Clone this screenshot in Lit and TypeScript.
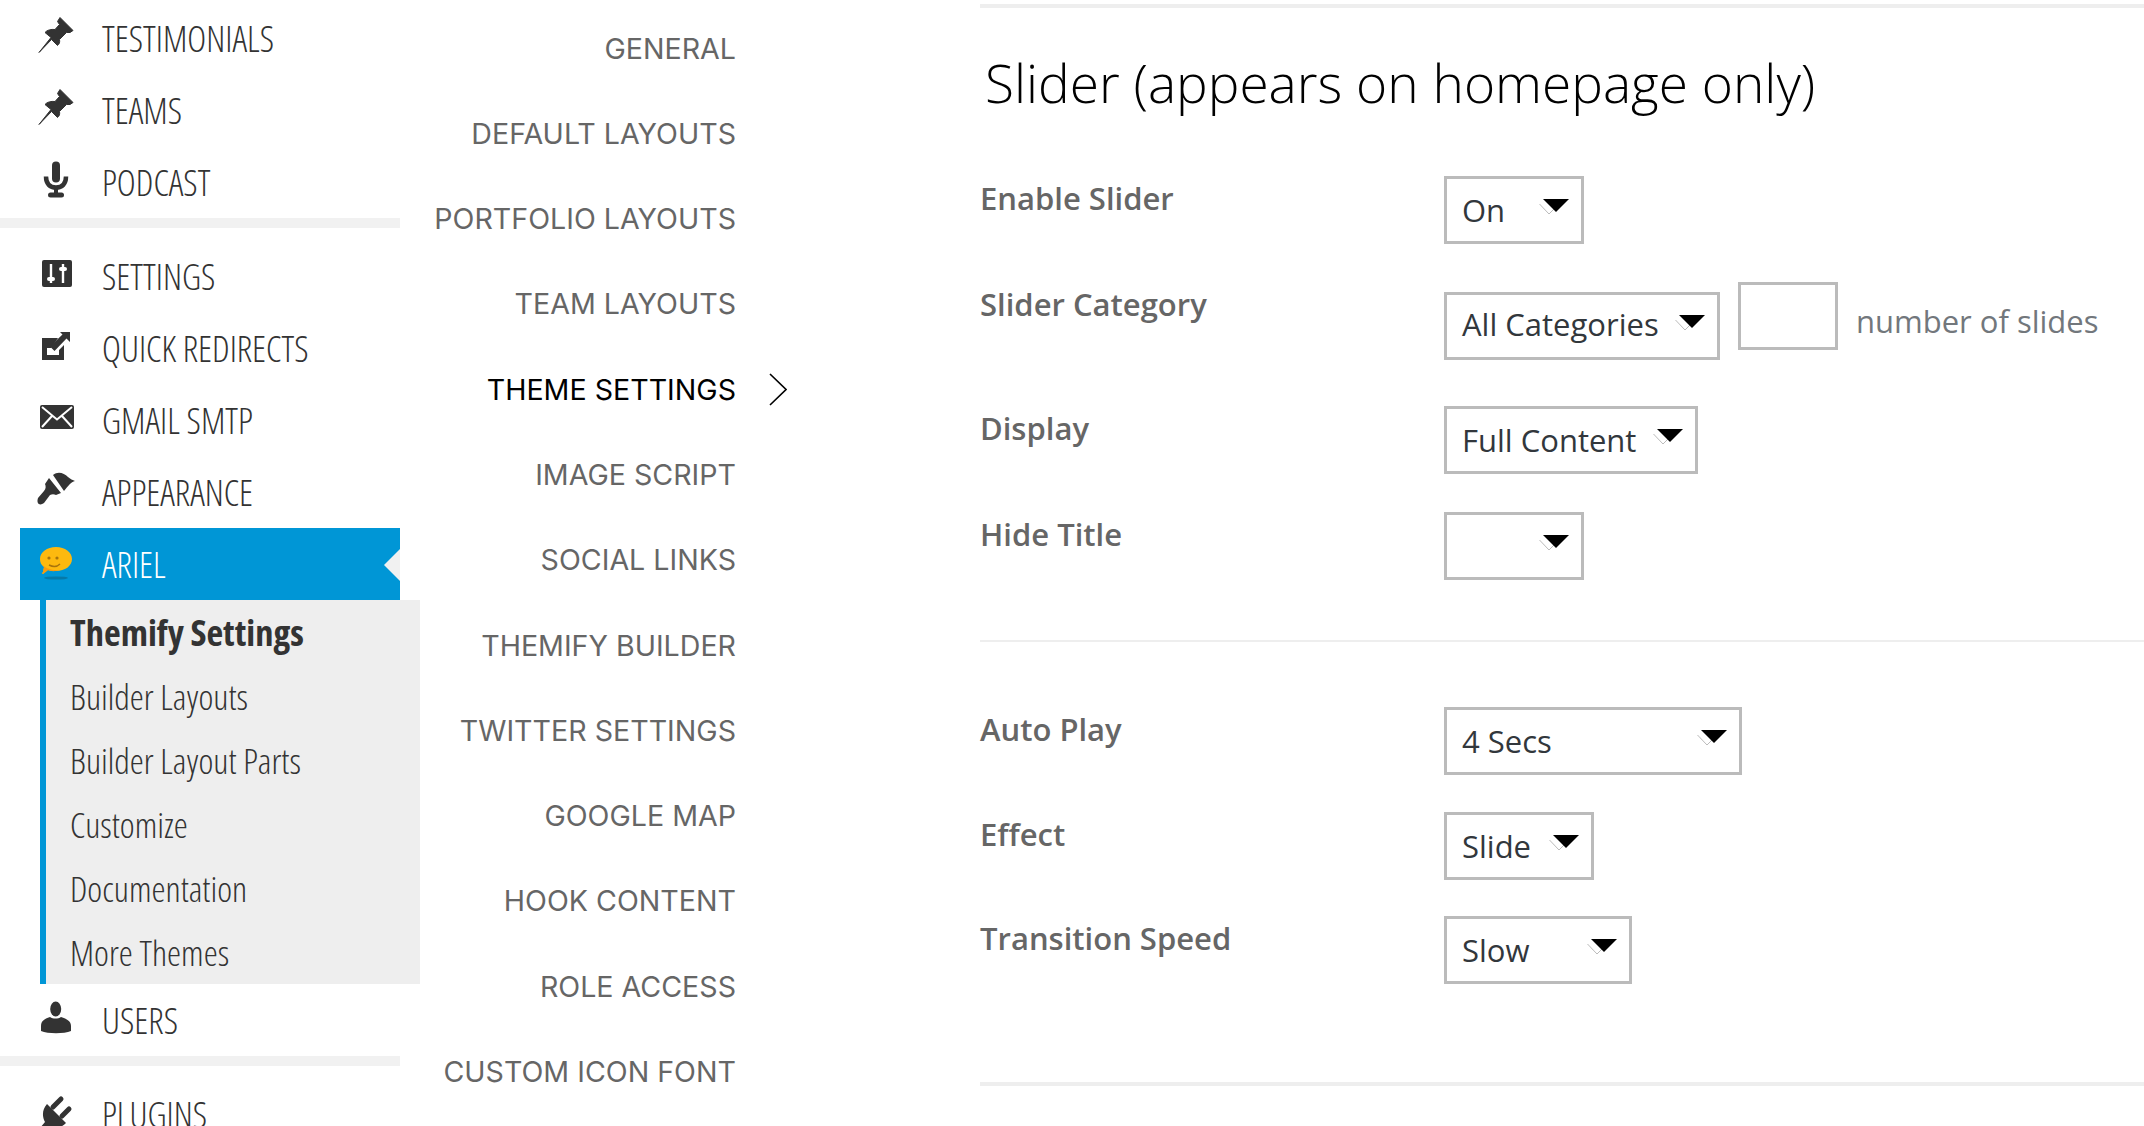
import { LitElement, css, html, svg } from "lit";
import { customElement } from "lit/decorators.js";
import { styleMap } from "lit/directives/style-map.js";

// icons share a 60x60 box, y=30 is the row's centre line
const pin = svg`<path stroke="#333" stroke-width="1" stroke-linejoin="round" d="M9 44.5 21 29.5 15 24.5C17 22 21 21 25 21.5L29.5 16.5 27.5 13.5 30 9.5 43 22.5 40 24.5 36.5 24.5 29.5 31.5C30 34 29.5 36 27.5 37.5L21.5 31.5Z"/>`;
const icons: Record<string, unknown> = {
  pin,
  mic: svg`<rect x="22" y="9.5" width="8" height="21" rx="4"/><path d="M16 24.5C16 32 20 35.5 26 35.5S36 32 36 24.5" fill="none" stroke="#333" stroke-width="4.5"/><path d="M24 35h4v6h-4z"/><rect x="18" y="40.5" width="16" height="5" rx="2.5"/>`,
  settings: svg`<rect x="12" y="14" width="30" height="27" rx="2"/><path d="M21 18v19M33 18v19" stroke="#fff" stroke-width="2.4"/><rect x="17" y="31" width="8" height="4" rx="2" fill="#fff"/><rect x="29" y="21" width="8" height="4" rx="2" fill="#fff"/>`,
  external: svg`<path d="M12 20H28L21 30H17V37H29V32L34 27V42H12Z"/><path d="M30 14H40V24L36.5 20.5 24.5 33 20 28.5 32.5 16.5Z"/>`,
  email: svg`<rect x="10" y="15" width="34" height="24" rx="2"/><path d="M12 17 27 29.5 42 17M12 37 22 26M42 37 32 26" fill="none" stroke="#fff" stroke-width="2"/>`,
  brush: svg`<path d="M23 13C28 9 34 11 38 15 40 17 43 18 45 19 41 20 38 24 34 29Z"/><path d="M19 16 31 31 26 33C24 32 22 32 20 33L14 41C10 44 6 42 8 36L14 29C16 27 16 24 15 22Z"/>`,
  users: svg`<ellipse cx="25.7" cy="19" rx="5.5" ry="7.5"/><path d="M11 36C11 31 14 29 20 27 23 29 28 29 31 27 37 29 41 31 41 36V41C34 44 18 44 11 41Z"/>`,
  plugin: svg`<path d="M17 20 36 39C30 45 25 44 20 42L14 48 10 44 15 38C12 32 12 26 17 20Z"/><path d="M23 23 31 15M32 32 39 25" stroke="#333" stroke-width="5" stroke-linecap="round"/>`,
  ariel: svg`<ellipse cx="26" cy="44" rx="12" ry="1.6" fill="#0679a8"/><path d="M26 13C35 13 42 18 42 25S35 37 26 37C23 37 20 37 18 36L13 40C12 40 12 39 13 38L14 33C11 31 10 28 10 25 10 18 17 13 26 13Z" fill="#fdb90f"/><path d="M11 29C14 34 22 37 30 36 24 38 20 37 18 36L13 40C12 40 12 39 13 38L14 33Z" fill="#f79a10"/><circle cx="19" cy="24" r="1.6" fill="#a8740c"/><circle cx="27" cy="24" r="1.6" fill="#a8740c"/><path d="M19 31C23 33 27 33 30 30" fill="none" stroke="#a8740c" stroke-width="1.4"/>`,
};

type MenuRow = { label: string; icon: string; active?: boolean };

const group1: MenuRow[] = [
  { label: "TESTIMONIALS", icon: "pin" },
  { label: "TEAMS", icon: "pin" },
  { label: "PODCAST", icon: "mic" },
];
const group2: MenuRow[] = [
  { label: "SETTINGS", icon: "settings" },
  { label: "QUICK REDIRECTS", icon: "external" },
  { label: "GMAIL SMTP", icon: "email" },
  { label: "APPEARANCE", icon: "brush" },
  { label: "ARIEL", icon: "ariel", active: true },
];
const submenu = ["Themify Settings", "Builder Layouts", "Builder Layout Parts", "Customize", "Documentation", "More Themes"];

const tabs = [
  "GENERAL",
  "DEFAULT LAYOUTS",
  "PORTFOLIO LAYOUTS",
  "TEAM LAYOUTS",
  "THEME SETTINGS",
  "IMAGE SCRIPT",
  "SOCIAL LINKS",
  "THEMIFY BUILDER",
  "TWITTER SETTINGS",
  "GOOGLE MAP",
  "HOOK CONTENT",
  "ROLE ACCESS",
  "CUSTOM ICON FONT",
];

@customElement("app-root")
export class AppRoot extends LitElement {
  private row(r: MenuRow) {
    return html`
      <div class=${r.active ? "row active" : "row"}>
        <svg class="icon" viewBox="0 0 60 60">${icons[r.icon]}</svg>
        <span class="row-label">${r.label}</span>
      </div>
    `;
  }

  private select(value: string, width: number) {
    return html`
      <div class="select" style=${styleMap({ width: `${width}px` })}>
        ${value}
        <svg class="caret" viewBox="0 0 30 16">
          <path d="M.5 5 10 15 15 10" fill="none" stroke="#bbb" />
          <path d="M4 0H30L17 13Z" />
        </svg>
      </div>
    `;
  }

  render() {
    return html`
      <aside>
        <div class="group first">${group1.map((r) => this.row(r))}</div>
        <div class="group">
          ${group2.map((r) => this.row(r))}
          <div class="submenu">
            ${submenu.map((s, i) => html`<div class=${i === 0 ? "sub current" : "sub"}>${s}</div>`)}
          </div>
          ${this.row({ label: "USERS", icon: "users" })}
        </div>
        <div class="group">${this.row({ label: "PLUGINS", icon: "plugin" })}</div>
      </aside>

      <nav>
        ${tabs.map(
          (t) => html`
            <div class=${t === "THEME SETTINGS" ? "tab on" : "tab"}>
              ${t}
              ${t === "THEME SETTINGS"
                ? html`<svg class="chevron" viewBox="0 0 18 33"><path d="M1 1 17 16.5 1 32" fill="none" stroke="#000" stroke-width="1.6" /></svg>`
                : ""}
            </div>
          `
        )}
      </nav>

      <main>
        <div class="rule thick"></div>
        <h2>Slider (appears on homepage only)</h2>
        <div class="field f1">
          <label>Enable Slider</label>
          ${this.select("On", 140)}
        </div>
        <div class="field f2">
          <label>Slider Category</label>
          <div class="inline">
            ${this.select("All Categories", 276)}
            <div class="number"></div>
            <span class="hint">number of slides</span>
          </div>
        </div>
        <div class="field f3">
          <label>Display</label>
          ${this.select("Full Content", 254)}
        </div>
        <div class="field f4">
          <label>Hide Title</label>
          ${this.select("", 140)}
        </div>
        <div class="rule thin"></div>
        <div class="field f5">
          <label>Auto Play</label>
          ${this.select("4 Secs", 298)}
        </div>
        <div class="field f6">
          <label>Effect</label>
          ${this.select("Slide", 150)}
        </div>
        <div class="field f7">
          <label>Transition Speed</label>
          ${this.select("Slow", 188)}
        </div>
        <div class="rule thick last"></div>
      </main>
    `;
  }

  static styles = css`
    :host {
      display: flex;
      width: 2144px;
      height: 1126px;
      overflow: hidden;
      background: #fff;
      font-family: "Open Sans", sans-serif;
    }

    aside {
      width: 400px;
      flex: none;
      background: #f1f1f1;
    }

    .group {
      background: #fff;
      padding-top: 12px;
      margin-bottom: 10px;
    }

    .group.first {
      padding-top: 2px;
    }

    .row {
      position: relative;
      display: flex;
      align-items: center;
      height: 72px;
      color: #333;
    }

    .icon {
      width: 60px;
      height: 60px;
      margin-left: 30px;
      margin-right: 12px;
      flex: none;
      fill: #333;
    }

    .row-label {
      font-size: 36px;
      font-weight: 300;
      font-stretch: 75%;
    }

    .row.active {
      margin-left: 20px;
      background: #0096d6;
      color: #fff;
    }

    .row.active .icon {
      margin-left: 10px;
    }

    .row.active::after {
      content: "";
      position: absolute;
      right: 0;
      top: 21px;
      border: 16px solid transparent;
      border-left-width: 0;
      border-right-color: #f1f1f1;
    }

    .submenu {
      width: 374px;
      margin-left: 40px;
      background: #eee;
      border-left: 6px solid #0096d6;
    }

    .sub {
      height: 64px;
      line-height: 64px;
      padding-left: 24px;
      font-size: 35.5px;
      font-weight: 300;
      font-stretch: 75%;
      color: #333;
    }

    .sub.current {
      font-size: 36.5px;
      font-weight: 700;
    }

    nav {
      position: relative;
      width: 540px;
      flex: none;
      padding: 5.5px 244px 0 0;
      box-sizing: border-box;
      margin-left: 40px;
    }

    /* the longest labels reach back over the grey gutter */
    .tab {
      position: relative;
      display: flex;
      justify-content: flex-end;
      height: 85.3px;
      line-height: 85.3px;
      white-space: nowrap;
      font-family: Inter, sans-serif;
      font-size: 28.6px;
      color: #666;
    }

    .tab.on {
      color: #000;
    }

    .chevron {
      position: absolute;
      left: calc(100% + 33px);
      top: 26px;
      width: 18px;
      height: 33px;
    }

    main {
      flex: 1;
      padding-top: 4px;
    }

    .rule {
      background: #eee;
    }

    .rule.thick {
      height: 4px;
    }

    .rule.thin {
      height: 2px;
      margin-top: 60px;
    }

    .rule.last {
      margin-top: 98px;
    }

    h2 {
      margin: 0;
      padding-left: 5px;
      height: 100px;
      line-height: 150px;
      font-size: 53.2px;
      font-weight: 300;
      color: #000;
    }

    .field {
      display: flex;
      align-items: flex-start;
    }

    .f1 {
      margin-top: 68px;
    }

    .f2 {
      margin-top: 38px;
    }

    .f3 {
      margin-top: 46px;
    }

    .f4 {
      margin-top: 38px;
    }

    .f5 {
      margin-top: 65px;
    }

    .f6 {
      margin-top: 37px;
    }

    .f7 {
      margin-top: 36px;
    }

    label {
      width: 464px;
      flex: none;
      line-height: 44px;
      font-size: 31px;
      font-weight: 600;
      color: #666;
    }

    .select {
      position: relative;
      height: 68px;
      box-sizing: border-box;
      border: 3px solid #bbb;
      padding-left: 15px;
      line-height: 62px;
      font-size: 31px;
      color: #32373c;
    }

    .caret {
      position: absolute;
      right: 12px;
      top: 20px;
      width: 30px;
      height: 16px;
    }

    .inline {
      display: flex;
      align-items: flex-start;
    }

    .inline .select {
      margin-top: 10px;
      line-height: 59px;
    }

    .number {
      width: 100px;
      height: 68px;
      box-sizing: border-box;
      margin-left: 18px;
      border: 3px solid #bbb;
    }

    .hint {
      height: 78px;
      margin-left: 18px;
      line-height: 78px;
      font-size: 31px;
      color: #72777c;
      white-space: nowrap;
    }
  `;
}
